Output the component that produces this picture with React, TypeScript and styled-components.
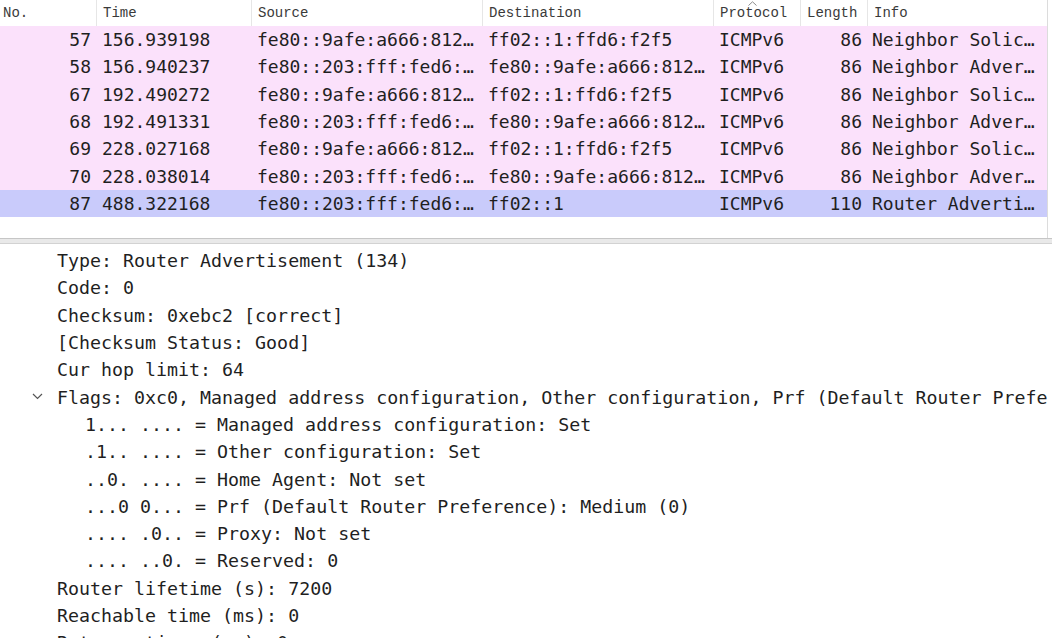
import * as React from 'react'
import styled, { createGlobalStyle } from 'styled-components'

const GlobalStyle = createGlobalStyle`
  html, body {
    margin: 0;
    padding: 0;
    background: #ffffff;
  }
  body {
    width: 1052px;
    height: 638px;
    overflow: hidden;
  }
`

const MONO = `"DejaVu Sans Mono", "Liberation Mono", monospace`

type Packet = {
  no: string
  time: string
  source: string
  destination: string
  protocol: string
  length: string
  info: string
  selected?: boolean
}

const packets: Packet[] = [
  { no: '57', time: '156.939198', source: 'fe80::9afe:a666:812…', destination: 'ff02::1:ffd6:f2f5', protocol: 'ICMPv6', length: '86', info: 'Neighbor Solic…' },
  { no: '58', time: '156.940237', source: 'fe80::203:fff:fed6:…', destination: 'fe80::9afe:a666:812…', protocol: 'ICMPv6', length: '86', info: 'Neighbor Adver…' },
  { no: '67', time: '192.490272', source: 'fe80::9afe:a666:812…', destination: 'ff02::1:ffd6:f2f5', protocol: 'ICMPv6', length: '86', info: 'Neighbor Solic…' },
  { no: '68', time: '192.491331', source: 'fe80::203:fff:fed6:…', destination: 'fe80::9afe:a666:812…', protocol: 'ICMPv6', length: '86', info: 'Neighbor Adver…' },
  { no: '69', time: '228.027168', source: 'fe80::9afe:a666:812…', destination: 'ff02::1:ffd6:f2f5', protocol: 'ICMPv6', length: '86', info: 'Neighbor Solic…' },
  { no: '70', time: '228.038014', source: 'fe80::203:fff:fed6:…', destination: 'fe80::9afe:a666:812…', protocol: 'ICMPv6', length: '86', info: 'Neighbor Adver…' },
  { no: '87', time: '488.322168', source: 'fe80::203:fff:fed6:…', destination: 'ff02::1', protocol: 'ICMPv6', length: '110', info: 'Router Adverti…', selected: true },
]

type Detail = { text: string; level: number; expanded?: boolean }

const details: Detail[] = [
  { text: 'Type: Router Advertisement (134)', level: 0 },
  { text: 'Code: 0', level: 0 },
  { text: 'Checksum: 0xebc2 [correct]', level: 0 },
  { text: '[Checksum Status: Good]', level: 0 },
  { text: 'Cur hop limit: 64', level: 0 },
  { text: 'Flags: 0xc0, Managed address configuration, Other configuration, Prf (Default Router Preference): Medium', level: 0, expanded: true },
  { text: '1... .... = Managed address configuration: Set', level: 1 },
  { text: '.1.. .... = Other configuration: Set', level: 1 },
  { text: '..0. .... = Home Agent: Not set', level: 1 },
  { text: '...0 0... = Prf (Default Router Preference): Medium (0)', level: 1 },
  { text: '.... .0.. = Proxy: Not set', level: 1 },
  { text: '.... ..0. = Reserved: 0', level: 1 },
  { text: 'Router lifetime (s): 7200', level: 0 },
  { text: 'Reachable time (ms): 0', level: 0 },
  { text: 'Retrans timer (ms): 0', level: 0 },
]

const COLS = '96px 155px 231px 231px 87px 67px 180px'

const Screen = styled.div`
  width: 1052px;
  height: 638px;
  display: flex;
  flex-direction: column;
  overflow: hidden;
  background: #fff;
`

const ListPane = styled.div`
  height: 238px;
  flex: none;
  width: 1047px;
  border-right: 1px solid #dcdcdc;
  display: flex;
  flex-direction: column;
`

const HeaderRow = styled.div`
  display: grid;
  grid-template-columns: ${COLS};
  height: 26px;
  flex: none;
`

const HeaderCell = styled.div<{ $first?: boolean }>`
  position: relative;
  display: flex;
  align-items: center;
  padding-left: ${(p) => (p.$first ? '3px' : '6px')};
  border-left: ${(p) => (p.$first ? 'none' : '1px solid #e6e6e6')};
  font-family: "Liberation Mono", monospace;
  font-size: 14px;
  color: #3a3a3a;
  white-space: nowrap;
`

const SortCaret = styled.svg`
  position: absolute;
  left: 34px;
  top: 1px;
`

const Row = styled.div<{ $selected?: boolean }>`
  display: grid;
  grid-template-columns: ${COLS};
  height: 27.3px;
  background: ${(p) => (p.$selected ? '#c9cbfb' : '#fbe1fb')};
  font-family: ${MONO};
  font-size: 18px;
  color: #1f1f1f;
`

const Cell = styled.div<{ $right?: boolean; $pad?: number }>`
  display: flex;
  align-items: center;
  justify-content: ${(p) => (p.$right ? 'flex-end' : 'flex-start')};
  padding: ${(p) => (p.$right ? `0 ${p.$pad ?? 5}px 0 0` : `0 0 0 ${p.$pad ?? 6}px`)};
  white-space: nowrap;
  overflow: hidden;
`

const Splitter = styled.div`
  height: 4px;
  flex: none;
  background: #e9e9e9;
  border-top: 1px solid #c6c6c6;
  border-bottom: 1px solid #d2d2d2;
`

const DetailPane = styled.div`
  flex: 1;
  width: 1048px;
  padding-top: 3px;
  font-family: ${MONO};
  font-size: 18.3px;
  color: #1f1f1f;
  overflow: hidden;
`

const DetailLine = styled.div<{ $level: number }>`
  height: 27.3px;
  display: flex;
  align-items: center;
  padding-left: ${(p) => 57 + p.$level * 28}px;
  white-space: nowrap;
  position: relative;
`

const Chevron = styled.svg`
  position: absolute;
  left: 32px;
  top: 10px;
`

const App: React.FC<{}> = () => {
  return (
    <React.Fragment>
      <GlobalStyle />
      <Screen>
        <ListPane>
          <HeaderRow>
            <HeaderCell $first>No.</HeaderCell>
            <HeaderCell>Time</HeaderCell>
            <HeaderCell>Source</HeaderCell>
            <HeaderCell>Destination</HeaderCell>
            <HeaderCell>
              <SortCaret width="9" height="5" viewBox="0 0 9 5">
                <path d="M0.5 4.5 L4.5 0.8 L8.5 4.5" fill="none" stroke="#8c8c8c" strokeWidth="1" />
              </SortCaret>
              Protocol
            </HeaderCell>
            <HeaderCell>Length</HeaderCell>
            <HeaderCell>Info</HeaderCell>
          </HeaderRow>
          {packets.map((p) => (
            <Row key={p.no} $selected={p.selected}>
              <Cell $right $pad={5}>{p.no}</Cell>
              <Cell $pad={6}>{p.time}</Cell>
              <Cell $pad={6}>{p.source}</Cell>
              <Cell $pad={6}>{p.destination}</Cell>
              <Cell $pad={6}>{p.protocol}</Cell>
              <Cell $right $pad={5}>{p.length}</Cell>
              <Cell $pad={5}>{p.info}</Cell>
            </Row>
          ))}
        </ListPane>
        <Splitter />
        <DetailPane>
          {details.map((d, i) => (
            <DetailLine key={i} $level={d.level}>
              {d.expanded && (
                <Chevron width="11" height="7" viewBox="0 0 11 7">
                  <path d="M1 1 L5.5 5.5 L10 1" fill="none" stroke="#555" strokeWidth="1.2" />
                </Chevron>
              )}
              {d.text}
            </DetailLine>
          ))}
        </DetailPane>
      </Screen>
    </React.Fragment>
  )
}

export default App
